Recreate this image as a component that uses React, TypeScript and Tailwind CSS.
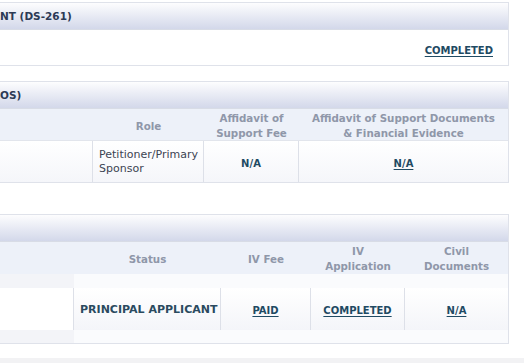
const font = { fontFamily: '"DejaVu Sans", Verdana, sans-serif' };

const PanelHeader = ({ title }: { title: string }) => (
  <div className="h-[27px] flex items-center pt-[2px] bg-gradient-to-b from-[#fdfdfe] to-[#d3d8ea] border-b border-[#d8dce6] text-[10.5px] font-bold text-[#2c3a55]">
    {title}
  </div>
);

const ColHead = ({ children, className = "" }: { children: React.ReactNode; className?: string }) => (
  <div className={`flex items-center justify-center text-center pt-[2px] text-[10.3px] leading-[15px] font-bold text-[#8f97a9] ${className}`}>
    {children}
  </div>
);

const LinkCell = ({ text }: { text: string }) => (
  <span className="text-[10px] font-bold text-[#1f4a63] underline underline-offset-[2px]">{text}</span>
);

export default function App() {
  return (
    <div className="w-[524px] h-[363px] bg-white overflow-hidden flex flex-col" style={font}>
      {/* DS-261 */}
      <div className="mt-[2px] w-[509px] border border-l-0 border-[#dfe2ea]">
        <PanelHeader title="NT (DS-261)" />
        <div className="h-[35px] flex items-center justify-end pr-[15px] pt-[6px]">
          <LinkCell text="COMPLETED" />
        </div>
      </div>

      {/* Affidavit of support */}
      <div className="mt-[15px] w-[509px] border border-l-0 border-[#dfe2ea]">
        <PanelHeader title="OS)" />
        <div className="grid grid-cols-[93px_111px_95px_1fr] h-[32px] bg-[#edf1f9] border-b border-[#e2e5ec]">
          <div />
          <ColHead>Role</ColHead>
          <ColHead>Affidavit of<br />Support Fee</ColHead>
          <ColHead>Affidavit of Support Documents<br />&amp; Financial Evidence</ColHead>
        </div>
        <div className="grid grid-cols-[93px_111px_95px_1fr] h-[41px] bg-gradient-to-b from-white to-[#f5f6fa]">
          <div className="border-r border-[#dde0e8]" />
          <div className="flex items-center pl-[6px] pt-[1px] text-[11px] leading-[14px] text-[#3c4452] border-r border-[#dde0e8]">
            Petitioner/Primary<br />Sponsor
          </div>
          <div className="flex items-center justify-center pt-[3px] text-[10px] font-bold text-[#1f4a63] border-r border-[#dde0e8]">N/A</div>
          <div className="flex items-center justify-center pt-[3px]"><LinkCell text="N/A" /></div>
        </div>
      </div>

      {/* Immigrant visa */}
      <div className="mt-[31px] w-[509px] border-t border-r border-[#dfe2ea]">
        <PanelHeader title="" />
        <div className="grid grid-cols-[74px_147px_90px_94px_1fr] h-[32px] bg-[#edf1f9]">
          <div />
          <ColHead>Status</ColHead>
          <ColHead>IV Fee</ColHead>
          <ColHead>IV<br />Application</ColHead>
          <ColHead>Civil<br />Documents</ColHead>
        </div>
        <div className="grid grid-cols-[74px_1fr] h-[14px]">
          <div className="bg-[#f3f4f8]" />
          <div className="bg-[#fafbfd]" />
        </div>
        <div className="grid grid-cols-[74px_147px_90px_94px_1fr] h-[42px]">
          <div className="bg-white border-r border-[#dde0e8]" />
          <div className="flex items-center pl-[6px] pt-[2px] text-[11px] font-bold text-[#2a4a5f] border-r border-[#dde0e8] bg-gradient-to-b from-white to-[#f4f5f9]">
            PRINCIPAL APPLICANT
          </div>
          <div className="flex items-center justify-center pt-[2px] border-r border-[#dde0e8] bg-gradient-to-b from-white to-[#f4f5f9]"><LinkCell text="PAID" /></div>
          <div className="flex items-center justify-center pt-[2px] border-r border-[#dde0e8] bg-gradient-to-b from-white to-[#f4f5f9]"><LinkCell text="COMPLETED" /></div>
          <div className="flex items-center justify-center pt-[2px] bg-gradient-to-b from-white to-[#f4f5f9]"><LinkCell text="N/A" /></div>
        </div>
        <div className="grid grid-cols-[74px_1fr] h-[14px] border-b border-[#dfe2ea]">
          <div className="bg-[#f3f4f8]" />
          <div className="bg-[#fafbfd]" />
        </div>
      </div>

      <div className="flex-1" />
      <div className="h-[5px] bg-[#f2f2f4]" />
    </div>
  );
}
